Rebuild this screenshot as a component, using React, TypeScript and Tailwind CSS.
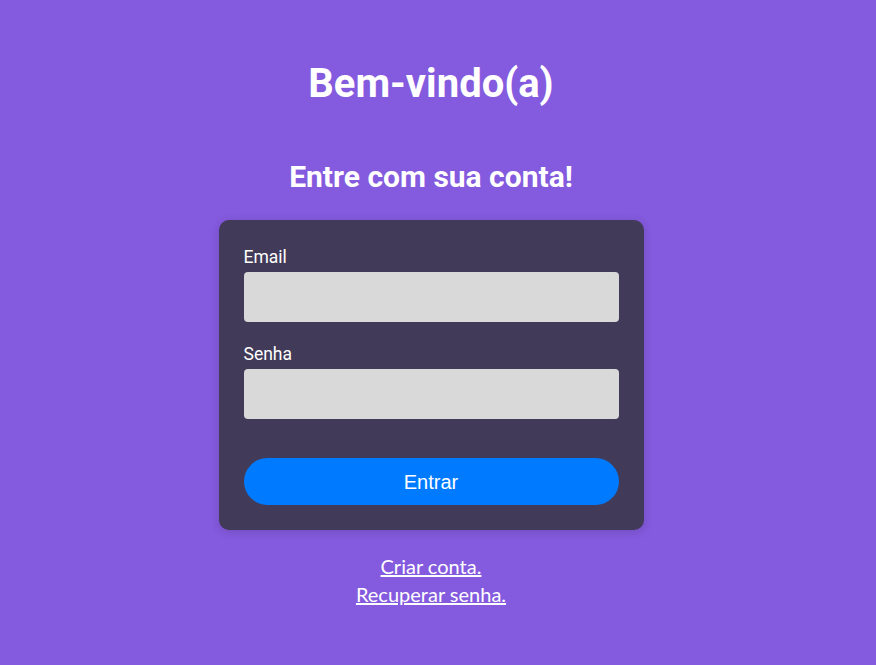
export default function App() {
  return (
    <div className="min-h-[665px] w-full bg-[#845ade] pr-[14px] font-['Roboto',sans-serif] text-white">
      <div className="flex flex-col items-center pt-[56px]">
        <h1 className="text-[40px] font-bold leading-[56px]">Bem-vindo(a)</h1>
        <h2 className="mt-[45px] text-[30px] font-bold leading-[40px]">Entre com sua conta!</h2>

        <form className="mt-[23px] flex w-[425px] flex-col rounded-[10px] bg-[#413a58] px-[25px] pt-[26px] pb-[25px] shadow-[0_2px_10px_rgba(0,0,0,0.15)]">
          <label className="text-[17.5px] leading-[22px]">Email</label>
          <input type="email" className="mt-[4px] h-[50px] rounded-[4px] bg-[#d9d9d9] px-3 text-black outline-none" />
          <label className="mt-[21px] text-[17.5px] leading-[22px]">Senha</label>
          <input type="password" className="mt-[4px] h-[50px] rounded-[4px] bg-[#d9d9d9] px-3 text-black outline-none" />
          <button
            type="button"
            className="mt-[39px] h-[47px] rounded-full bg-[#007bff] font-['Liberation_Sans',Arial,sans-serif] text-[20px] text-white"
          >
            Entrar
          </button>
        </form>

        <div className="mt-[22px] flex flex-col items-center font-['Lato',sans-serif] text-[20px] leading-[28px]">
          <a href="#" className="underline">Criar conta.</a>
          <a href="#" className="underline">Recuperar senha.</a>
        </div>
      </div>
    </div>
  )
}
